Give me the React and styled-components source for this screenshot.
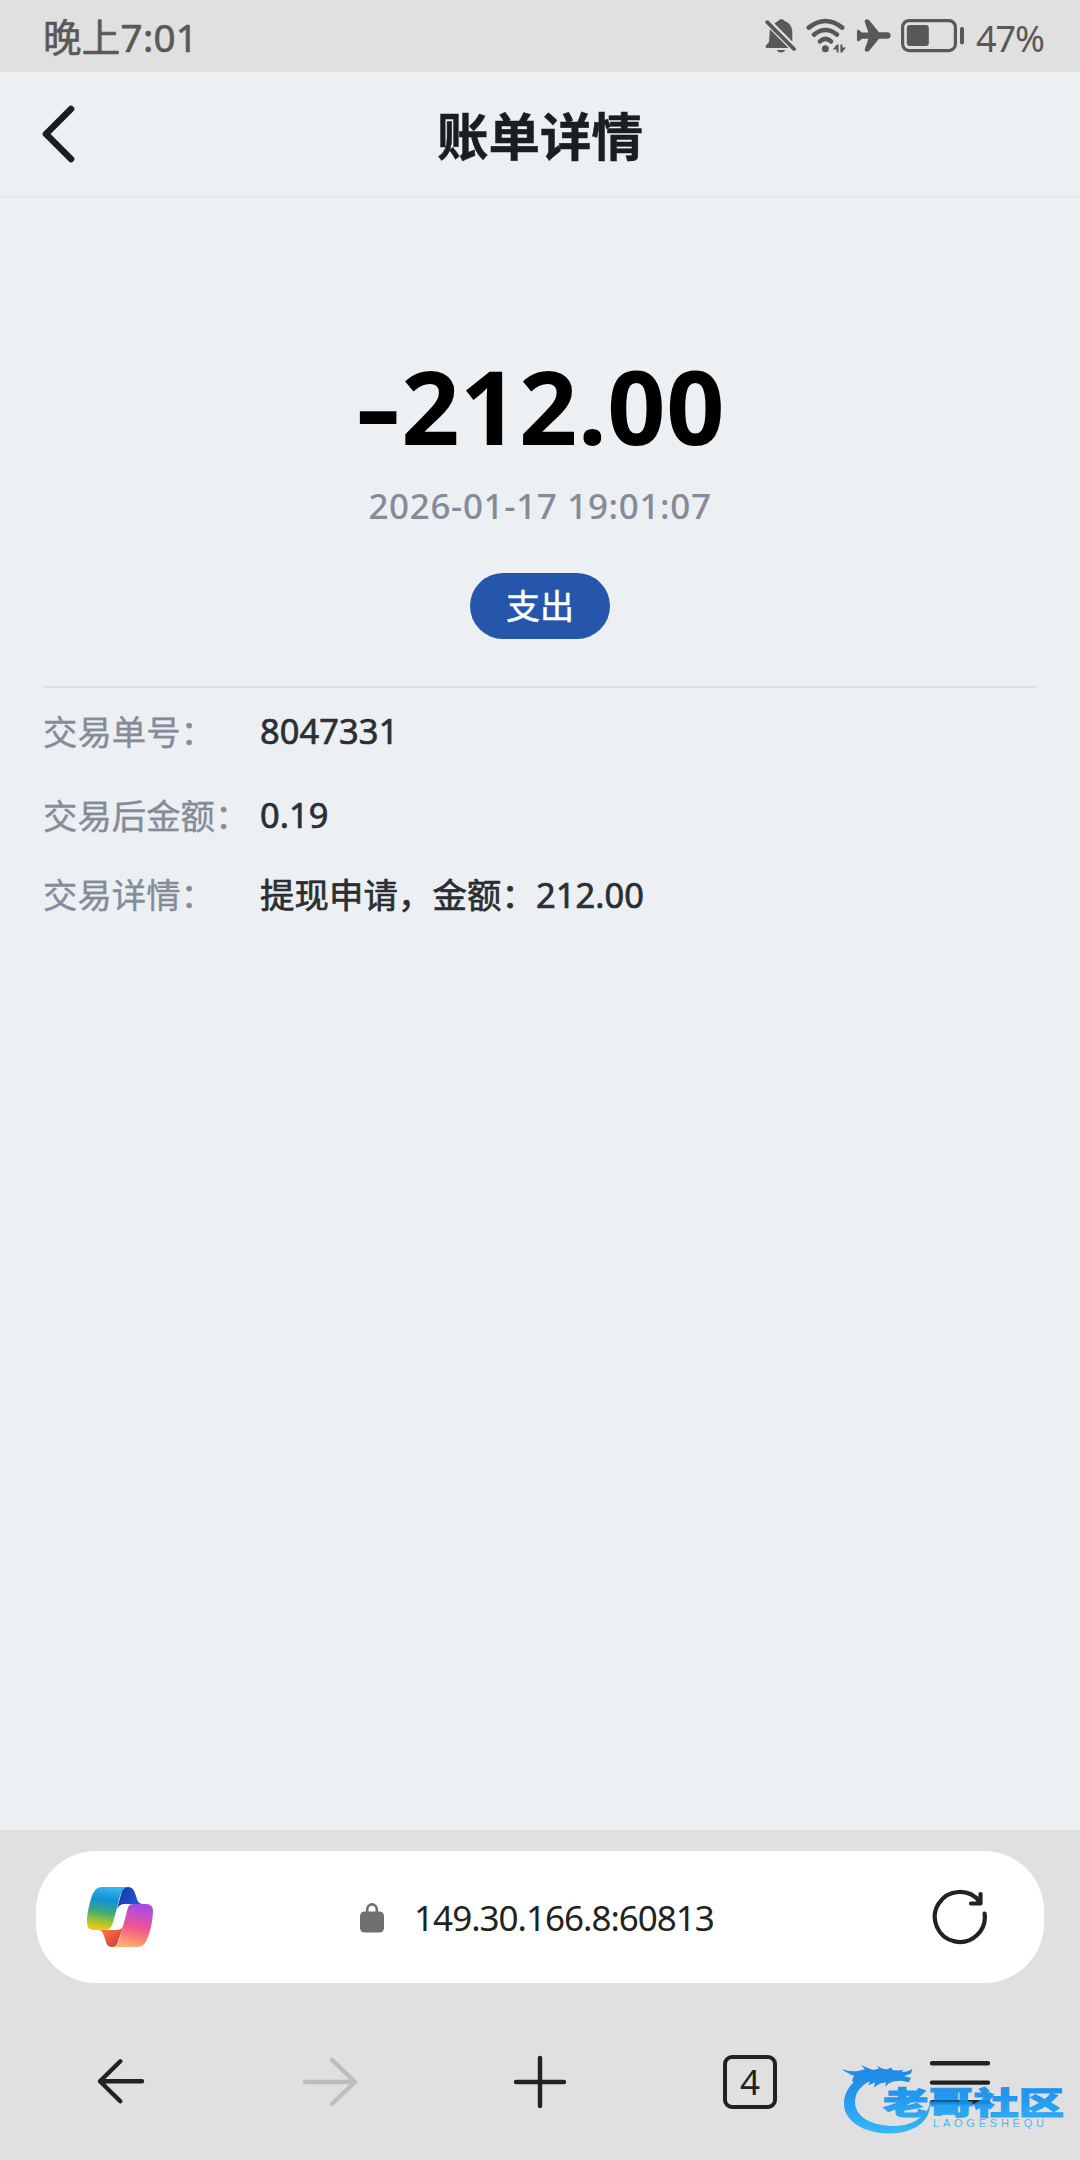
import React from 'react'
import styled, { createGlobalStyle } from 'styled-components'

const rows = [
    { label: '交易单号：', value: '8047331', height: 84 },
    { label: '交易后金额：', value: '0.19', height: 84 },
    { label: '交易详情：', value: '提现申请，金额：212.00', height: 74 },
]

const BellOff = () => (
    <svg width="32" height="36" viewBox="0 0 32 36" fill="#585858">
        <path d="M9.5 5.6C10.8 4.2 12 3.4 13.2 2.9c1.5-2.2 4.8-2.2 6.3 0 5 1.6 7.8 6 7.8 11.1v9.4z" />
        <path d="M4.9 11.2 23.6 30H2c-1.6 0-1.8-1.7-.6-3L4 24z" />
        <path d="M11.8 32h8.4c-.8 3.2-7.6 3.2-8.4 0z" />
        <path d="M2.2 4.2 29 31" stroke="#585858" strokeWidth="3.8" strokeLinecap="round" />
    </svg>
)

const Wifi = () => (
    <svg width="41" height="36" viewBox="0 0 41 36" fill="none">
        <g stroke="#585858" strokeWidth="4.6" strokeLinecap="round">
            <path d="M2.8 9.6Q19.5-3.6 36.2 9.6" />
            <path d="M8 16.6Q19.5 7.4 31 16.6" />
            <path d="M14 23.4Q19.5 18.4 25 23.4" />
        </g>
        <circle cx="19.4" cy="30.7" r="3.5" fill="#585858" />
        <path d="M26.6 31.4 31 26.4h1.6v8h-2v-3zM34.4 26.4h2v3h3.6l-4 5h-1.6z" fill="#585858" />
    </svg>
)

const Plane = () => (
    <svg width="36" height="36" viewBox="0 0 36 36" fill="#585858">
        <path d="M1 13.2c0-1.6 1.6-1.8 2.6-.8L5.8 14.4h6.6L8.8 4c-.8-2.4 2.6-3.9 4.4-1.7L23 14.2h8.4c4.4 0 4.4 6.6 0 6.6H23l-9.8 12c-1.8 2.2-5.2.7-4.400-1.700l3.600-10.400H5.800l-2.200 2c-1 1-2.600.8-2.600-.8z" />
    </svg>
)

const Battery = () => (
    <svg width="64" height="34" viewBox="0 0 64 34" fill="none">
        <rect x="1.6" y="1.6" width="52.8" height="30" rx="6.5" stroke="#585858" strokeWidth="3.2" />
        <rect x="5.8" y="6" width="22" height="21" rx="3" fill="#585858" />
        <rect x="59" y="8" width="4" height="17.4" rx="1.8" fill="#585858" />
    </svg>
)

const CopilotLogo = () => (
    <svg width="66" height="60" viewBox="0 0 66 60">
        <defs>
            <linearGradient id="ribbonLeft" x1="0.55" y1="0" x2="0.4" y2="1">
                <stop offset="0" stopColor="#35b6f0" />
                <stop offset="0.3" stopColor="#1590d8" />
                <stop offset="0.55" stopColor="#35a588" />
                <stop offset="0.78" stopColor="#93c03a" />
                <stop offset="1" stopColor="#f2cb10" />
            </linearGradient>
            <linearGradient id="ribbonRight" x1="0.6" y1="0" x2="0.4" y2="1">
                <stop offset="0" stopColor="#a24be0" />
                <stop offset="0.25" stopColor="#c850c4" />
                <stop offset="0.5" stopColor="#ee5490" />
                <stop offset="0.78" stopColor="#fb8377" />
                <stop offset="1" stopColor="#fdb273" />
            </linearGradient>
            <linearGradient id="foldTop" x1="0" y1="0" x2="1" y2="0.5">
                <stop offset="0" stopColor="#16349c" />
                <stop offset="1" stopColor="#2258dc" />
            </linearGradient>
            <linearGradient id="foldBottom" x1="0" y1="0" x2="0.8" y2="1">
                <stop offset="0" stopColor="#fb8f4c" />
                <stop offset="0.45" stopColor="#f4633f" />
                <stop offset="1" stopColor="#c4413c" />
            </linearGradient>
        </defs>
        <path d="M36 0h5c5 0 6.500 4 8 9 1.200 4.500 2.500 7.200 6 8H38c-3.500 0-5.500 1-8 5z" fill="url(#foldTop)" />
        <path d="M11 43c4.500 0 5.500 4 7 9 1.500 5 2.500 8 7 8h4L37 38c-2 4-4 5-9 5z" fill="url(#foldBottom)" />
        <path d="M15 0h26c-6 .6-8 8-10 17l-4 15c-2 8-4 11-9 11H7c-5 0-7-3-7-8C0 26 4 8 7.500 4 9.500 1 12 0 15 0z" fill="url(#ribbonLeft)" />
        <path d="M46 17h13c5 0 7 3 7 7 0 9-3.500 26-8 32-2 3-5 4-8 4H25c6-.6 8-8 10-17l4-15c2-8 2.500-11 7-11z" fill="url(#ribbonRight)" />
    </svg>
)

const DragonMark = () => (
    <svg width="226" height="78" viewBox="0 0 226 78">
        <defs>
            <linearGradient id="mark" gradientUnits="userSpaceOnUse" x1="0" y1="4" x2="0" y2="74">
                <stop offset="0" stopColor="#0a7fe8" />
                <stop offset="0.45" stopColor="#0f8ff0" />
                <stop offset="1" stopColor="#27b4fb" />
            </linearGradient>
        </defs>
        <g fill="url(#mark)">
            <path d="M30 13C15 18 4 29 4 44c0 17 20 29.500 46 29.500C72 73.500 90 62 90 45c-6 14-20 21-36 21-22 0-39-9-39-24 0-11 8-19 20-23z" />
            <path d="M2 9c6 2.600 12 2.800 18 1.400l5-1.200-4-4.200 8 3.400 4 1.600 6-1.600-2-3 5 3.200 5 .8 4-2 2 2.800 6 .2 4-.6-1 2.200 5-.6 5.500-2.400-1.500 4.500-7 2.800 7 1.400-2 4.600-8-1.600-7 .6-5 2-4 3.400 1-4.400-6 1.200-6 4 1-5-7 3 2-4-8 2-6 2-4-5 2-5-4-1C11 13.500 5 12.500 2 9z" />
            <text x="43" y="54" fontFamily="'Noto Sans CJK SC', sans-serif" fontWeight="900" fontSize="31" textLength="181" lengthAdjust="spacingAndGlyphs" stroke="url(#mark)" strokeWidth="1.100">老哥社区</text>
            <text x="93" y="67" fontFamily="'Liberation Sans', sans-serif" fontSize="11" textLength="111" opacity="0.85">LAOGESHEQU</text>
        </g>
    </svg>
)

const App = () => {
    return (
        <>
            <GlobalStyle />
            <Screen>
                <StatusBar>
                    <Clock>晚上7:01</Clock>
                    <StatusIcons>
                        <BellOff />
                        <Wifi />
                        <Plane />
                        <Battery />
                        <Percent>47%</Percent>
                    </StatusIcons>
                </StatusBar>

                <Header>
                    <BackButton>
                        <svg width="34" height="58" viewBox="0 0 34 58" fill="none" stroke="#1a1d21" strokeWidth="6.600" strokeLinecap="round" strokeLinejoin="round">
                            <path d="M29 4 4 29l25 25" />
                        </svg>
                    </BackButton>
                    <Title>账单详情</Title>
                </Header>

                <Content>
                    <Summary>
                        <Amount><Minus>-</Minus>212.00</Amount>
                        <Time>2026-01-17 19:01:07</Time>
                        <Tag>支出</Tag>
                    </Summary>
                    <Details>
                        {rows.map((el, ind) => (
                            <Row key={ind} height={el.height}>
                                <Label>{el.label}</Label>
                                <Value>{el.value}</Value>
                            </Row>
                        ))}
                    </Details>
                </Content>

                <Browser>
                    <AddressBar>
                        <CopilotLogo />
                        <Address>
                            <svg width="24" height="31" viewBox="0 0 24 31">
                                <path d="M7.200 11V7.200a4.800 4.800 0 0 1 9.600 0V11" fill="none" stroke="#707070" strokeWidth="2.600" />
                                <rect y="9.500" width="24" height="21" rx="4.500" fill="#707070" />
                            </svg>
                            <span>149.30.166.8:60813</span>
                        </Address>
                        <svg width="56" height="56" viewBox="0 0 56 56" fill="none" stroke="#222" strokeWidth="4.200" strokeLinecap="round" strokeLinejoin="round">
                            <path d="M52.600 24.500A25 25 0 1 1 47.500 12.500M48.500 5v9.500h-9.500" />
                        </svg>
                    </AddressBar>
                    <Nav>
                        <NavItem>
                            <svg width="56" height="56" viewBox="0 0 56 56"><path d="M50 27.300H8M28.300 7.300 8 27.300l20.300 20" /></svg>
                        </NavItem>
                        <NavItem disabled>
                            <svg width="56" height="56" viewBox="0 0 56 56"><path d="M3 28h50M30 6l23 22-23 22" /></svg>
                        </NavItem>
                        <NavItem>
                            <svg width="56" height="56" viewBox="0 0 56 56"><path d="M28 4v48M4 28h48" /></svg>
                        </NavItem>
                        <NavItem>
                            <TabCount>4</TabCount>
                        </NavItem>
                        <NavItem>
                            <svg width="64" height="56" viewBox="0 0 64 56"><path d="M4 9.200h56M4 28.600h56M4 48.200h56" /></svg>
                        </NavItem>
                    </Nav>
                    <Watermark><DragonMark /></Watermark>
                </Browser>
            </Screen>
        </>
    )
}

export default App

const GlobalStyle = createGlobalStyle`
    *{
        box-sizing:border-box;
    }
    body{
        margin:0;
        background:#ecf0f3;
        font-family:'Noto Sans', 'Noto Sans CJK SC', sans-serif;
    }
    svg{
        display:block;
        flex-shrink:0;
    }
    button{
        border:0;
        padding:0;
        background:none;
        font:inherit;
    }
`

const Screen = styled.div`
    width:1080px;
    height:2160px;
    display:flex;
    flex-direction:column;
    overflow:hidden;
`

const StatusBar = styled.div`
    height:72px;
    flex-shrink:0;
    padding:0 36px 0 43px;
    display:flex;
    align-items:center;
    justify-content:space-between;
    background:#e0e0e0;
    color:#585858;
`

const Clock = styled.div`
    padding-top:2px;
    font-size:38.500px;
    line-height:70px;
    letter-spacing:0.3px;
    -webkit-text-stroke:0.6px #585858;
`

const StatusIcons = styled.div`
    display:flex;
    align-items:center;
    gap:9px;
`

const Percent = styled.span`
    margin-left:2px;
    padding-top:5px;
    font-size:36px;
    line-height:67px;
    letter-spacing:-1px;
`

const Header = styled.div`
    height:126px;
    flex-shrink:0;
    padding:0 42px;
    display:grid;
    grid-template-columns:34px 1fr 34px;
    align-items:center;
    border-bottom:2px solid #e7ebee;
`

const BackButton = styled.button`
    cursor:pointer;
`

const Title = styled.div`
    text-align:center;
    font-family:'Noto Sans CJK SC', sans-serif;
    font-size:51.500px;
    font-weight:700;
    line-height:60px;
    color:#1a1d21;
    -webkit-text-stroke:0.5px #1a1d21;
`

const Content = styled.div`
    flex:1;
    padding:0 43px;
`

const Summary = styled.div`
    height:490px;
    padding-top:138px;
    display:flex;
    flex-direction:column;
    align-items:center;
    border-bottom:2px solid #dce1e9;
`

const Amount = styled.div`
    padding-left:7px;
    font-size:102px;
    font-weight:700;
    line-height:140px;
    letter-spacing:0.6px;
    color:#000000;
`

const Minus = styled.span`
    display:inline-block;
    transform:scaleX(1.36);
    margin-right:6px;
`

const Time = styled.div`
    margin-top:6px;
    font-size:35px;
    font-weight:500;
    line-height:48px;
    letter-spacing:0.65px;
    color:#868b9a;
`

const Tag = styled.div`
    margin-top:43px;
    width:140px;
    height:66px;
    border-radius:33px;
    background:#2656ab;
    color:#ffffff;
    font-size:34px;
    font-weight:400;
    line-height:67px;
    text-align:center;
    -webkit-text-stroke:0.5px #ffffff;
`

const Details = styled.div`
    font-size:34.400px;
`

const Row = styled.div`
    height:${({ height }) => height}px;
    display:grid;
    grid-template-columns:217px 1fr;
    align-items:center;
`

const Label = styled.div`
    color:#868b9a;
    white-space:nowrap;
    -webkit-text-stroke:0.4px #868b9a;
`

const Value = styled.div`
    color:#2b2e33;
    letter-spacing:0.1px;
    -webkit-text-stroke:0.7px #2b2e33;
`

const Browser = styled.div`
    position:relative;
    height:330px;
    flex-shrink:0;
    padding-top:21px;
    background:#e0e0e0;
`

const AddressBar = styled.div`
    height:132px;
    margin:0 36px;
    padding:0 56px 0 51px;
    display:flex;
    align-items:center;
    justify-content:space-between;
    border-radius:60px;
    background:#ffffff;
`

const Address = styled.div`
    display:flex;
    align-items:center;
    gap:30px;
    margin-right:11px;
    font-size:35px;
    letter-spacing:-1px;
    color:#222222;
`

const Nav = styled.div`
    height:198px;
    padding:0 15px;
    display:grid;
    grid-template-columns:repeat(5, 1fr);
`

const NavItem = styled.button`
    display:flex;
    align-items:center;
    justify-content:center;
    cursor:pointer;
    svg{
        fill:none;
        stroke:${({ disabled }) => disabled ? `#bdbdbd` : `#222222`};
        stroke-width:4.400px;
        stroke-linecap:round;
        stroke-linejoin:round;
    }
`

const TabCount = styled.span`
    width:54px;
    height:54px;
    border:4px solid #222222;
    border-radius:9px;
    font-size:35px;
    font-weight:400;
    line-height:46px;
    text-align:center;
    color:#222222;
`

const Watermark = styled.div`
    position:absolute;
    left:840px;
    top:230px;
    opacity:0.9;
    pointer-events:none;
`
